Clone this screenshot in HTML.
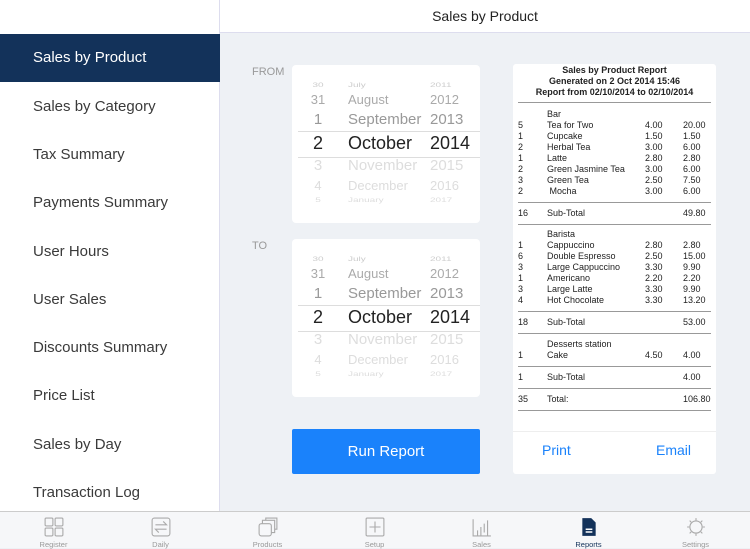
<!DOCTYPE html>
<html><head><meta charset="utf-8"><style>
*{margin:0;padding:0;box-sizing:border-box}
body{width:750px;height:548px;overflow:hidden;background:#eef1f5;font-family:"Liberation Sans",sans-serif;position:relative}
.a{position:absolute;white-space:nowrap}
#side{position:absolute;left:0;top:0;width:220px;height:511px;background:#fff;border-right:1px solid #dde}
.si{position:absolute;left:0;width:220px;height:48px;line-height:48px;padding-left:33px;font-size:15px;color:#3a3a3a}
.sel{background:#13325a;color:#fff}
#hdr{position:absolute;left:220px;top:0;width:530px;height:33px;background:#fff;border-bottom:1px solid #dde;text-align:center;line-height:33px;font-size:14px;color:#222}
.pk{position:absolute;left:292px;width:188px;height:158px;background:#fff;border-radius:4px;overflow:hidden}
.pk .r{position:absolute;left:0;width:188px;height:20px;line-height:20px}
.pk .d{position:absolute;left:14px;width:24px;text-align:center}
.pk .m{position:absolute;left:56px}
.pk .y{position:absolute;left:138px}
.lbl{position:absolute;left:252px;font-size:11px;color:#999}
#btn{position:absolute;left:292px;top:429px;width:188px;height:45px;background:#1a82fb;color:#fff;font-size:15px;text-align:center;line-height:45px;border-radius:2px}
#rep{position:absolute;left:513px;top:64px;width:203px;height:410px;background:#fff;border-radius:3px;font-size:9px;color:#222}
.rw{position:absolute;left:0;width:203px;height:11px;line-height:11px}
.rw span{position:absolute}
.q{left:5px}.n{left:34px}.p{left:132px}.t{left:170px}
.ln{position:absolute;left:5px;width:193px;height:1px;background:#999}
#tabs{position:absolute;left:0;top:511px;width:750px;height:37px;background:#f6f7f9;border-top:1px solid #ccc}
.tb{position:absolute;top:0;width:107px;text-align:center;font-size:7.5px;color:#999}
.tb svg{display:block;margin:5px auto 3px}
</style></head><body>
<div id="side">
<div class="si sel" style="top:34px">Sales by Product</div>
<div class="si" style="top:83px">Sales by Category</div>
<div class="si" style="top:131px">Tax Summary</div>
<div class="si" style="top:179px">Payments Summary</div>
<div class="si" style="top:228px">User Hours</div>
<div class="si" style="top:276px">User Sales</div>
<div class="si" style="top:324px">Discounts Summary</div>
<div class="si" style="top:372px">Price List</div>
<div class="si" style="top:421px">Sales by Day</div>
<div class="si" style="top:469px">Transaction Log</div>
</div>
<div id="hdr">Sales by Product</div>
<div class="lbl" style="top:66px">FROM</div>
<div class="lbl" style="top:240px">TO</div>

<div class="pk" style="top:65px">
<div class="r" style="top:11px;font-size:10px;color:#ccc;transform:scaleY(.6)"><span class="d">30</span><span class="m">July</span><span class="y">2011</span></div>
<div class="r" style="top:25px;font-size:13px;color:#aaa"><span class="d">31</span><span class="m">August</span><span class="y">2012</span></div>
<div class="r" style="top:45px;font-size:15px;color:#999"><span class="d">1</span><span class="m">September</span><span class="y">2013</span></div>
<div style="position:absolute;left:6px;right:0;top:66px;height:1px;background:#ddd"></div>
<div class="r" style="top:66px;font-size:18px;color:#222;height:24px;line-height:24px"><span class="d">2</span><span class="m">October</span><span class="y">2014</span></div>
<div style="position:absolute;left:6px;right:0;top:92px;height:1px;background:#ddd"></div>
<div class="r" style="top:91px;font-size:15px;color:#ddd"><span class="d">3</span><span class="m">November</span><span class="y">2015</span></div>
<div class="r" style="top:111px;font-size:13px;color:#ddd"><span class="d">4</span><span class="m">December</span><span class="y">2016</span></div>
<div class="r" style="top:126px;font-size:10px;color:#ddd;transform:scaleY(.6)"><span class="d">5</span><span class="m">January</span><span class="y">2017</span></div>
</div>
<div class="pk" style="top:239px">
<div class="r" style="top:11px;font-size:10px;color:#ccc;transform:scaleY(.6)"><span class="d">30</span><span class="m">July</span><span class="y">2011</span></div>
<div class="r" style="top:25px;font-size:13px;color:#aaa"><span class="d">31</span><span class="m">August</span><span class="y">2012</span></div>
<div class="r" style="top:45px;font-size:15px;color:#999"><span class="d">1</span><span class="m">September</span><span class="y">2013</span></div>
<div style="position:absolute;left:6px;right:0;top:66px;height:1px;background:#ddd"></div>
<div class="r" style="top:66px;font-size:18px;color:#222;height:24px;line-height:24px"><span class="d">2</span><span class="m">October</span><span class="y">2014</span></div>
<div style="position:absolute;left:6px;right:0;top:92px;height:1px;background:#ddd"></div>
<div class="r" style="top:91px;font-size:15px;color:#ddd"><span class="d">3</span><span class="m">November</span><span class="y">2015</span></div>
<div class="r" style="top:111px;font-size:13px;color:#ddd"><span class="d">4</span><span class="m">December</span><span class="y">2016</span></div>
<div class="r" style="top:126px;font-size:10px;color:#ddd;transform:scaleY(.6)"><span class="d">5</span><span class="m">January</span><span class="y">2017</span></div>
</div>
<div id="btn">Run Report</div>

<div id="rep">
<div class="a" style="left:0;width:203px;top:1px;text-align:center;font-weight:bold;font-size:9px;line-height:11px">Sales by Product Report<br>Generated on 2 Oct 2014 15:46<br>Report from 02/10/2014 to 02/10/2014</div>
<div class="ln" style="top:38px"></div>
<div class="rw" style="top:45px"><span class="n">Bar</span></div>
<div class="rw" style="top:56px"><span class="q">5</span><span class="n">Tea for Two</span><span class="p">4.00</span><span class="t">20.00</span></div>
<div class="rw" style="top:67px"><span class="q">1</span><span class="n">Cupcake</span><span class="p">1.50</span><span class="t">1.50</span></div>
<div class="rw" style="top:78px"><span class="q">2</span><span class="n">Herbal Tea</span><span class="p">3.00</span><span class="t">6.00</span></div>
<div class="rw" style="top:89px"><span class="q">1</span><span class="n">Latte</span><span class="p">2.80</span><span class="t">2.80</span></div>
<div class="rw" style="top:100px"><span class="q">2</span><span class="n">Green Jasmine Tea</span><span class="p">3.00</span><span class="t">6.00</span></div>
<div class="rw" style="top:111px"><span class="q">3</span><span class="n">Green Tea</span><span class="p">2.50</span><span class="t">7.50</span></div>
<div class="rw" style="top:122px"><span class="q">2</span><span class="n">&nbsp;Mocha</span><span class="p">3.00</span><span class="t">6.00</span></div>
<div class="ln" style="top:138px"></div>
<div class="rw" style="top:144px"><span class="q">16</span><span class="n">Sub-Total</span><span class="t">49.80</span></div>
<div class="ln" style="top:160px"></div>
<div class="rw" style="top:165px"><span class="n">Barista</span></div>
<div class="rw" style="top:176px"><span class="q">1</span><span class="n">Cappuccino</span><span class="p">2.80</span><span class="t">2.80</span></div>
<div class="rw" style="top:187px"><span class="q">6</span><span class="n">Double Espresso</span><span class="p">2.50</span><span class="t">15.00</span></div>
<div class="rw" style="top:198px"><span class="q">3</span><span class="n">Large Cappuccino</span><span class="p">3.30</span><span class="t">9.90</span></div>
<div class="rw" style="top:209px"><span class="q">1</span><span class="n">Americano</span><span class="p">2.20</span><span class="t">2.20</span></div>
<div class="rw" style="top:220px"><span class="q">3</span><span class="n">Large Latte</span><span class="p">3.30</span><span class="t">9.90</span></div>
<div class="rw" style="top:231px"><span class="q">4</span><span class="n">Hot Chocolate</span><span class="p">3.30</span><span class="t">13.20</span></div>
<div class="ln" style="top:247px"></div>
<div class="rw" style="top:253px"><span class="q">18</span><span class="n">Sub-Total</span><span class="t">53.00</span></div>
<div class="ln" style="top:269px"></div>
<div class="rw" style="top:275px"><span class="n">Desserts station</span></div>
<div class="rw" style="top:286px"><span class="q">1</span><span class="n">Cake</span><span class="p">4.50</span><span class="t">4.00</span></div>
<div class="ln" style="top:302px"></div>
<div class="rw" style="top:308px"><span class="q">1</span><span class="n">Sub-Total</span><span class="t">4.00</span></div>
<div class="ln" style="top:324px"></div>
<div class="rw" style="top:330px"><span class="q">35</span><span class="n">Total:</span><span class="t">106.80</span></div>
<div class="ln" style="top:346px"></div>
<div style="position:absolute;left:0;right:0;top:367px;height:1px;background:#eee"></div>
<div class="a" style="left:29px;top:378px;font-size:14px;color:#1a82fb">Print</div>
<div class="a" style="left:143px;top:378px;font-size:14px;color:#1a82fb">Email</div>
</div>

<div id="tabs">
<div class="tb" style="left:0"><svg width="20" height="20" viewBox="0 0 18 18" fill="none" stroke="#aaa"><rect x="1" y="1" width="7" height="7" rx="1"/><rect x="10" y="1" width="7" height="7" rx="1"/><rect x="1" y="10" width="7" height="7" rx="1"/><rect x="10" y="10" width="7" height="7" rx="1"/></svg>Register</div>
<div class="tb" style="left:107px"><svg width="20" height="20" viewBox="0 0 18 18" fill="none" stroke="#aaa"><rect x="1" y="1" width="16" height="16" rx="2"/><path d="M4 7h10l-3-3M14 11H4l3 3"/></svg>Daily</div>
<div class="tb" style="left:214px"><svg width="20" height="20" viewBox="0 0 18 18" fill="none" stroke="#aaa"><rect x="1" y="6" width="11" height="11" rx="2"/><path d="M4 6V3h11v11h-3M7 3V1h10v10h-2"/></svg>Products</div>
<div class="tb" style="left:321px"><svg width="20" height="20" viewBox="0 0 18 18" fill="none" stroke="#aaa"><rect x="1" y="1" width="16" height="16" rx="1"/><path d="M9 4v10M4 9h10"/></svg>Setup</div>
<div class="tb" style="left:428px"><svg width="20" height="20" viewBox="0 0 18 18" fill="none" stroke="#aaa"><path d="M1 2v15h16M5 12v5M8 9v8M11 6v8M14 3v14"/></svg>Sales</div>
<div class="tb" style="left:535px;color:#13325a"><svg width="20" height="20" viewBox="0 0 18 18"><path d="M3 1h8l4 4v12H3z" fill="#13325a"/><path d="M6 11h6M6 13.5h6" stroke="#fff" stroke-width="1.3"/></svg>Reports</div>
<div class="tb" style="left:642px"><svg width="20" height="20" viewBox="0 0 18 18" fill="none" stroke="#aaa"><circle cx="9" cy="9" r="5.5"/><path d="M9 1v2M9 15v2M1 9h2M15 9h2M3.3 3.3l1.4 1.4M13.3 13.3l1.4 1.4M3.3 14.7l1.4-1.4M13.3 4.7l1.4-1.4"/></svg>Settings</div>
</div>
</body></html>
